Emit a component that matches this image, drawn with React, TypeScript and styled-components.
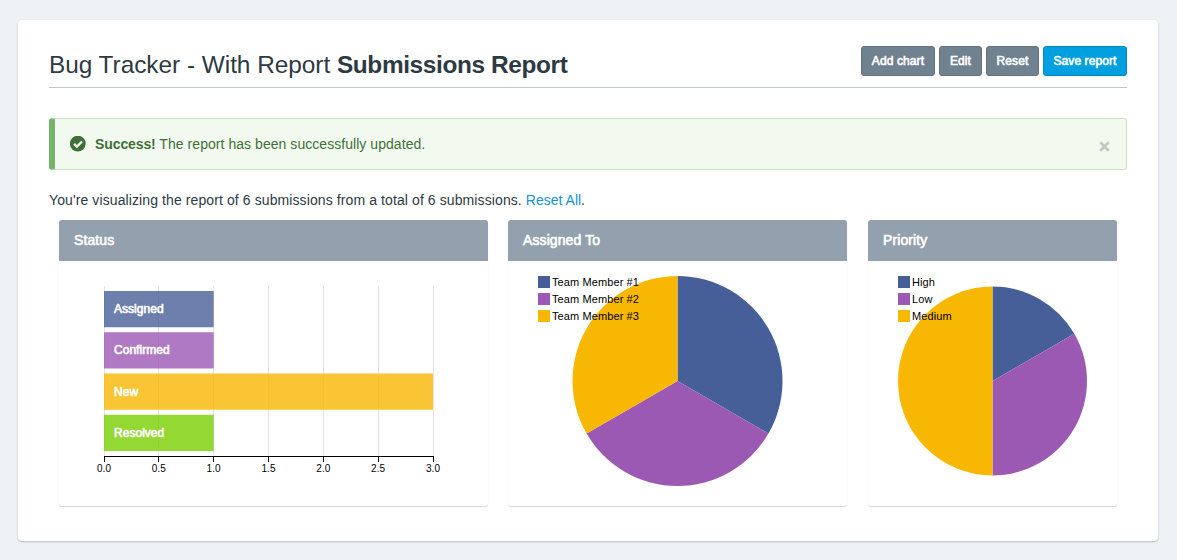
import React from "react";
import styled, { createGlobalStyle, css } from "styled-components";

const GlobalStyle = createGlobalStyle`
  * { box-sizing: border-box; }
  html, body { margin: 0; padding: 0; background: #eef2f5; }
  body {
    font-family: "Liberation Sans", Arial, sans-serif;
    font-size: 14px;
    color: #2d3a43;
  }
`;

const mediumWeight = css`
  font-weight: 400;
  -webkit-text-stroke: 0.6px #fff;
`;

const Page = styled.main`
  height: 560px;
  padding: 20px 19px 19px 18px;
  overflow: hidden;
`;

const Card = styled.section`
  height: 521px;
  padding: 26px 31px 0;
  background: #fff;
  border-radius: 4px;
  box-shadow: 0 1px 2px rgba(120, 140, 160, 0.5);
`;

const Header = styled.header`
  display: flex;
  justify-content: space-between;
  align-items: flex-start;
  height: 42px;
  border-bottom: 1px solid #bfc9d1;
`;

const Title = styled.h1`
  margin: 4px 0 0;
  font-size: 24.4px;
  font-weight: 400;
  line-height: 30px;
  white-space: nowrap;
`;

const TitlePart = styled.span<{ $spacing: number; $strong?: boolean }>`
  font-weight: ${(p) => (p.$strong ? 700 : 400)};
  letter-spacing: ${(p) => p.$spacing}px;
`;

const Actions = styled.div`
  display: flex;
  gap: 4px;
`;

const Button = styled.button<{ $width: number; $primary?: boolean }>`
  width: ${(p) => p.$width}px;
  height: 30px;
  padding: 0;
  border: 1px solid ${(p) => (p.$primary ? "#0089c4" : "#627483")};
  border-radius: 3px;
  background: ${(p) => (p.$primary ? "#009fdf" : "#708290")};
  color: #fff;
  font: 400 12px/28px "Liberation Sans", Arial, sans-serif;
  ${mediumWeight}
  letter-spacing: 0.1px;
  white-space: nowrap;
`;

const Alert = styled.div`
  display: flex;
  align-items: center;
  height: 52px;
  margin-top: 30px;
  padding: 0 16px 0 15px;
  background: #f2faef;
  border: 1px solid #c5e3bd;
  border-left: 6px solid #75b466;
  border-radius: 3px;
  color: #3f7039;
`;

const AlertText = styled.p`
  flex: 1;
  margin: 0 0 0 9px;
  line-height: 20px;
  letter-spacing: 0.05px;
`;

const AlertStrong = styled.strong`
  letter-spacing: -0.1px;
`;

const CloseIcon = styled.svg`
  margin-top: 5px;
`;

const Summary = styled.p`
  margin: 20px 0 0;
  height: 30px;
  line-height: 20px;
  letter-spacing: 0.1px;
  white-space: nowrap;
`;

const Link = styled.a`
  color: #1293d8;
  letter-spacing: 0;
  text-decoration: none;
`;

const Panels = styled.div`
  display: flex;
  justify-content: space-between;
  padding: 0 10px;
`;

const Panel = styled.article<{ $width: number }>`
  width: ${(p) => p.$width}px;
  height: 286px;
  border-radius: 3px;
  box-shadow: 0 1px 1px rgba(150, 165, 185, 0.45);
  background: #fff;

  &:nth-child(2) {
    margin-right: 1px;
  }
`;

const PanelTitle = styled.h2`
  margin: 0;
  height: 41px;
  padding-left: 15px;
  border-radius: 3px 3px 0 0;
  background: #93a1ae;
  color: #fff;
  font-size: 14px;
  ${mediumWeight}
  line-height: 40px;
  letter-spacing: 0.1px;
`;

const Chart = styled.svg`
  display: block;
`;

const BarLabel = styled.text`
  fill: #fff;
  stroke: #fff;
  stroke-width: 0.6px;
  font-size: 12px;
  letter-spacing: 0.03px;
`;

const TickLabel = styled.text`
  fill: #000;
  font-size: 10px;
  letter-spacing: 0.1px;
  text-anchor: middle;
`;

const LegendLabel = styled.text`
  fill: #000;
  font-size: 11px;
  letter-spacing: 0.1px;
`;

const BLUE = "#475f98";
const PURPLE = "#9b59b4";
const YELLOW = "#f8b703";
const GREEN = "#79ce00";

const bars = [
  { label: "Assigned", value: 1, color: BLUE },
  { label: "Confirmed", value: 1, color: PURPLE },
  { label: "New", value: 3, color: YELLOW },
  { label: "Resolved", value: 1, color: GREEN },
];

const ticks = [0, 0.5, 1, 1.5, 2, 2.5, 3];

function BarChart() {
  const left = 45;
  const unit = 329 / 3;
  return (
    <Chart width="429" height="243">
      {ticks.map((t) => (
        <rect key={t} x={Math.floor(left + t * unit)} y="25" width="1" height="170" fill="#e2e2e2" />
      ))}
      {bars.map((b, i) => (
        <g key={b.label}>
          <rect x={left} y={30 + i * 41.25} width={b.value * unit} height="36.25" fill={b.color} fillOpacity="0.8" />
          <BarLabel x={left + 10} y={52 + Math.round(i * 41.4)}>{b.label}</BarLabel>
        </g>
      ))}
      <path d="M45.5 201v-5.5h329v5.5" fill="none" stroke="#000" />
      {ticks.map((t) => (
        <g key={t}>
          <rect x={Math.floor(left + t * unit)} y="195" width="1" height="6" />
          <TickLabel x={left + t * unit} y="211">{t.toFixed(1)}</TickLabel>
        </g>
      ))}
    </Chart>
  );
}

interface Slice {
  label: string;
  value: number;
  color: string;
}

interface PieProps {
  slices: Slice[];
  width: number;
  cx: number;
  cy: number;
  r: number;
}

function PieChart({ slices, width, cx, cy, r }: PieProps) {
  const total = slices.reduce((sum, s) => sum + s.value, 0);
  const point = (v: number) => {
    const a = (v / total) * Math.PI * 2;
    return `${cx + r * Math.sin(a)} ${cy - r * Math.cos(a)}`;
  };
  let start = 0;
  return (
    <Chart width={width} height="243">
      {slices.map((s) => {
        const from = start;
        start += s.value;
        return (
          <path
            key={s.label}
            d={`M${cx} ${cy}L${point(from)}A${r} ${r} 0 0 1 ${point(start)}Z`}
            fill={s.color}
          />
        );
      })}
      {slices.map((s, i) => (
        <g key={s.label}>
          <rect x="30" y={15 + i * 17} width="12" height="12" fill={s.color} />
          <LegendLabel x="44" y={25 + i * 17}>{s.label}</LegendLabel>
        </g>
      ))}
    </Chart>
  );
}

const assignees: Slice[] = [
  { label: "Team Member #1", value: 2, color: BLUE },
  { label: "Team Member #2", value: 2, color: PURPLE },
  { label: "Team Member #3", value: 2, color: YELLOW },
];

const priorities: Slice[] = [
  { label: "High", value: 1, color: BLUE },
  { label: "Low", value: 2, color: PURPLE },
  { label: "Medium", value: 3, color: YELLOW },
];

export default function App() {
  return (
    <>
      <GlobalStyle />
      <Page>
        <Card>
          <Header>
            <Title>
              <TitlePart $spacing={-0.03}>Bug Tracker - With Report </TitlePart>
              <TitlePart $spacing={-0.37} $strong>Submissions Report</TitlePart>
            </Title>
            <Actions>
              <Button $width={74}>Add chart</Button>
              <Button $width={43}>Edit</Button>
              <Button $width={53}>Reset</Button>
              <Button $width={84} $primary>Save report</Button>
            </Actions>
          </Header>
          <Alert>
            <svg width="16" height="16" viewBox="0 0 16 16">
              <circle cx="7.8" cy="7.6" r="7.9" fill="#3f7039" />
              <path d="M4.1 7.9l2.8 2.7 5.1-5.1" fill="none" stroke="#f2faef" strokeWidth="2.3" />
            </svg>
            <AlertText>
              <AlertStrong>Success!</AlertStrong> The report has been successfully updated.
            </AlertText>
            <CloseIcon width="11" height="11" viewBox="0 0 11 11">
              <path d="M1.3 1.3l8.4 8.4M9.7 1.3L1.3 9.7" stroke="#c1c8bf" strokeWidth="2.7" />
            </CloseIcon>
          </Alert>
          <Summary>
            You're visualizing the report of 6 submissions from a total of 6 submissions. <Link>Reset All</Link>.
          </Summary>
          <Panels>
            <Panel $width={429}>
              <PanelTitle>Status</PanelTitle>
              <BarChart />
            </Panel>
            <Panel $width={339}>
              <PanelTitle>Assigned To</PanelTitle>
              <PieChart slices={assignees} width={339} cx={169.5} cy={120} r={105} />
            </Panel>
            <Panel $width={249}>
              <PanelTitle>Priority</PanelTitle>
              <PieChart slices={priorities} width={249} cx={124.5} cy={120} r={94.5} />
            </Panel>
          </Panels>
        </Card>
      </Page>
    </>
  );
}
